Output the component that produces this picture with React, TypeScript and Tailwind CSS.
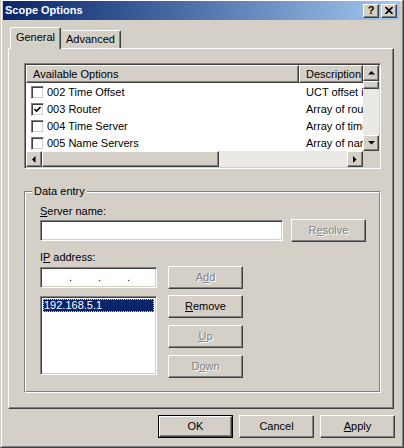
import type { ReactNode } from 'react';

const raised =
  'border border-t-white border-l-white border-r-[#404040] border-b-[#404040] shadow-[inset_-1px_-1px_0_#808080]';
const sunken =
  'border border-t-[#808080] border-l-[#808080] border-r-white border-b-white shadow-[inset_1px_1px_0_#404040,inset_-1px_-1px_0_#d4d0c8]';
const grayText = 'text-[#808080] [text-shadow:1px_1px_0_#ffffff]';

const options = [
  { name: '002 Time Offset', desc: 'UCT offset in seconds', checked: false },
  { name: '003 Router', desc: 'Array of router addresses', checked: true },
  { name: '004 Time Server', desc: 'Array of time server addresses', checked: false },
  { name: '005 Name Servers', desc: 'Array of name servers', checked: false },
];

function Arrow({ dir }: { dir: 'up' | 'down' | 'left' | 'right' }) {
  const pts = {
    up: '3.5,0 0,3.5 7,3.5',
    down: '0,0 7,0 3.5,3.5',
    left: '3.5,0 3.5,7 0,3.5',
    right: '0,0 0,7 3.5,3.5',
  }[dir];
  const w = dir === 'up' || dir === 'down' ? 7 : 4;
  const h = dir === 'up' || dir === 'down' ? 4 : 7;
  return (
    <svg width={w} height={h} viewBox={`0 0 ${w} ${h}`}>
      <polygon points={pts} fill="#000" />
    </svg>
  );
}

function Btn({
  children,
  disabled,
  isDefault,
  className = 'w-[75px] h-[23px]',
}: {
  children: ReactNode;
  disabled?: boolean;
  isDefault?: boolean;
  className?: string;
}) {
  const inner = (
    <div
      className={`flex h-full w-full items-center justify-center bg-[#d4d0c8] ${raised} ${
        disabled ? grayText : 'text-black'
      }`}
    >
      {children}
    </div>
  );
  return (
    <div className={`shrink-0 ${className} ${isDefault ? 'border border-black' : ''}`}>{inner}</div>
  );
}

function ScrollBtn({ dir, className }: { dir: 'up' | 'down' | 'left' | 'right'; className: string }) {
  return (
    <div className={`flex shrink-0 items-center justify-center bg-[#d4d0c8] ${raised} ${className}`}>
      <Arrow dir={dir} />
    </div>
  );
}

function CheckBox({ checked }: { checked: boolean }) {
  return (
    <div className={`flex h-[13px] w-[13px] shrink-0 items-center justify-center bg-white ${sunken}`}>
      {checked && (
        <svg width="7" height="7" viewBox="0 0 7 7">
          <polyline points="0.5,3 2.5,5 6.5,1" fill="none" stroke="#000" strokeWidth="1.6" />
        </svg>
      )}
    </div>
  );
}

export default function App() {
  return (
    <div className="flex h-[448px] w-[404px] flex-col overflow-hidden border-b border-l border-r border-b-[#404040] border-l-[#d4d0c8] border-r-[#404040] bg-[#d4d0c8] font-['Liberation_Sans',Arial,sans-serif] text-[11px] leading-[13px] text-black">
      <div className="flex flex-1 flex-col border border-b-[#808080] border-l-white border-r-[#808080] border-t-white pl-[1px] pr-[2px]">
        {/* title bar */}
        <div className="flex h-[19px] shrink-0 items-center justify-between bg-gradient-to-r from-[#0a246a] to-[#a6caf0] pl-[2px]">
          <span className="font-bold text-white">Scope Options</span>
          <div className="mr-[3px] flex gap-[2px]">
            <div className={`flex h-[14px] w-[16px] items-center justify-center bg-[#d4d0c8] ${raised}`}>
              <span className="text-[11px] font-bold leading-none">?</span>
            </div>
            <div className={`flex h-[14px] w-[16px] items-center justify-center bg-[#d4d0c8] ${raised}`}>
              <svg width="8" height="7" viewBox="0 0 8 7">
                <path d="M0.5 0 L7.5 7 M7.5 0 L0.5 7" stroke="#000" strokeWidth="1.6" />
              </svg>
            </div>
          </div>
        </div>

        {/* tabs */}
        <div className="relative z-10 -mb-[1px] ml-[7px] mt-[7px] flex h-[22px] items-end">
          <div className="flex h-[22px] w-[51px] items-center justify-center rounded-t-[2px] border-l border-r border-t border-l-white border-r-[#404040] border-t-white bg-[#d4d0c8] pb-[2px] shadow-[inset_-1px_0_0_#808080]">
            General
          </div>
          <div className="mb-[1px] flex h-[18px] w-[60px] items-center justify-center rounded-t-[2px] border-r border-t border-r-[#404040] border-t-white bg-[#d4d0c8] shadow-[inset_-1px_0_0_#808080]">
            Advanced
          </div>
        </div>

        {/* panel */}
        <div className={`ml-[5px] mr-[6px] flex h-[361px] flex-col bg-[#d4d0c8] pl-[15px] pt-[14px] ${raised}`}>
          {/* list view */}
          <div className={`flex h-[106px] w-[357px] flex-col bg-white ${sunken} p-[1px]`}>
            <div className="flex min-h-0 flex-1">
              <div className="flex min-w-0 flex-1 flex-col overflow-hidden">
                <div className="flex h-[18px] shrink-0">
                  <div className={`flex w-[273px] items-center bg-[#d4d0c8] pl-[6px] ${raised}`}>Available Options</div>
                  <div className={`flex flex-1 items-center overflow-hidden whitespace-nowrap bg-[#d4d0c8] pl-[6px] ${raised}`}>
                    Description
                  </div>
                </div>
                <div className="mt-[1px] flex flex-col">
                  {options.map((o) => (
                    <div key={o.name} className="flex h-[17px] shrink-0 items-center">
                      <div className="flex w-[273px] items-center pl-[5px]">
                        <CheckBox checked={o.checked} />
                        <span className="ml-[3px]">{o.name}</span>
                      </div>
                      <div className="flex-1 overflow-hidden whitespace-nowrap pl-[7px]">{o.desc}</div>
                    </div>
                  ))}
                </div>
              </div>
              <div className="flex w-[16px] shrink-0 flex-col">
                <ScrollBtn dir="up" className="h-[16px] w-[16px]" />
                <div className={`h-[8px] w-[16px] bg-[#d4d0c8] ${raised}`} />
                <div className="flex-1 bg-[#ebe9e5]" />
                <ScrollBtn dir="down" className="h-[16px] w-[16px]" />
              </div>
            </div>
            <div className="flex h-[16px] shrink-0">
              <ScrollBtn dir="left" className="h-[16px] w-[16px]" />
              <div className={`h-[16px] w-[177px] bg-[#d4d0c8] ${raised}`} />
              <div className="flex-1 bg-[#ebe9e5]" />
              <ScrollBtn dir="right" className="h-[16px] w-[16px]" />
              <div className="h-[16px] w-[16px] bg-[#d4d0c8]" />
            </div>
          </div>

          {/* data entry group */}
          <div className="relative mt-[22px] h-[202px] w-[357px] border border-b-white border-l-[#808080] border-r-white border-t-[#808080]">
            <span className="absolute -top-[7px] left-[7px] bg-[#d4d0c8] px-[2px]">Data entry</span>
            <div className="flex h-full flex-col border border-b-[#808080] border-l-white border-r-[#808080] border-t-white pl-[14px] pt-[12px]">
              <span>
                <u>S</u>erver name:
              </span>
              <div className="mt-[1px] flex items-center">
                <div className={`h-[21px] w-[243px] bg-white ${sunken}`} />
                <Btn disabled className="ml-[8px] h-[23px] w-[75px]">
                  R<u>e</u>solve
                </Btn>
              </div>

              <span className="mt-[9px]">
                I<u>P</u> address:
              </span>
              <div className="mt-[2px] flex items-center">
                <div className={`flex h-[21px] w-[117px] items-center bg-white pl-[1px] ${sunken}`}>
                  <span className="w-[27px]" />
                  <span className="w-[3px]">.</span>
                  <span className="w-[26px]" />
                  <span className="w-[3px]">.</span>
                  <span className="w-[26px]" />
                  <span className="w-[3px]">.</span>
                </div>
                <Btn disabled className="ml-[11px] h-[23px] w-[75px]">
                  A<u>d</u>d
                </Btn>
              </div>

              <div className="mt-[6px] flex items-start">
                <div className={`mt-[1px] h-[79px] w-[117px] bg-white p-[2px] ${sunken}`}>
                  <div className="flex h-[13px] items-center bg-[#0a246a] pl-[1px] text-white outline-1 -outline-offset-1 outline-dotted outline-[#d4d0c8]">
                    192.168.5.1
                  </div>
                </div>
                <div className="ml-[11px] flex flex-col gap-[7px]">
                  <Btn>
                    <u>R</u>emove
                  </Btn>
                  <Btn disabled>
                    <u>U</u>p
                  </Btn>
                  <Btn disabled>
                    D<u>o</u>wn
                  </Btn>
                </div>
              </div>
            </div>
          </div>
        </div>

        {/* bottom buttons */}
        <div className="mt-[6px] flex justify-end gap-[6px] pr-[5px]">
          <Btn isDefault>OK</Btn>
          <Btn>Cancel</Btn>
          <Btn>
            <u>A</u>pply
          </Btn>
        </div>
      </div>
    </div>
  );
}
